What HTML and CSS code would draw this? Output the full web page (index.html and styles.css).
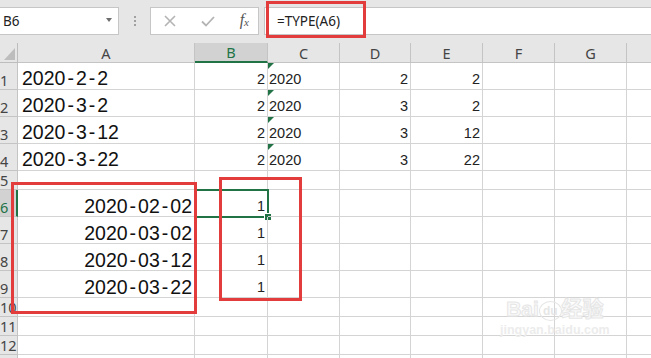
FILE: index.html
```html
<!DOCTYPE html>
<html lang="zh-CN">
<head>
    <meta charset="UTF-8">
    <meta name="viewport" content="width=device-width, initial-scale=1.0">
    <title>TYPE 函数</title>
    <link rel="stylesheet" href="styles.css">
</head>
<body>
    <div class="toolbar">
        <div class="name-box">
            <span>B6</span>
            <span class="drop"></span>
        </div>
        <div class="grip"><i></i><i></i><i></i></div>
        <div class="fx-buttons">
            <svg class="ico" width="12" height="12" viewBox="0 0 12 12"><path d="M1 1 L11 11 M11 1 L1 11" stroke="#b4b4b4" stroke-width="1.6" fill="none"/></svg>
            <svg class="ico" width="14" height="11" viewBox="0 0 14 11"><path d="M1 5.5 L5 9.5 L13 1" stroke="#b4b4b4" stroke-width="1.8" fill="none"/></svg>
            <span class="fx">f<sub>x</sub></span>
        </div>
        <div class="formula">=TYPE(A6)</div>
    </div>

    <div class="sheet">
        <div class="corner"><span class="tri"></span></div>
        <div class="ch">A</div>
        <div class="ch active">B</div>
        <div class="ch">C</div>
        <div class="ch">D</div>
        <div class="ch">E</div>
        <div class="ch">F</div>
        <div class="ch">G</div>
        <div class="ch"></div>

        <div class="rh">1</div>
        <div class="c big">2020<span class="dash">-</span>2<span class="dash">-</span>2</div>
        <div class="c num">2</div>
        <div class="c txt flag">2020</div>
        <div class="c num">2</div>
        <div class="c num">2</div>
        <div class="c"></div><div class="c"></div><div class="c"></div>

        <div class="rh">2</div>
        <div class="c big">2020<span class="dash">-</span>3<span class="dash">-</span>2</div>
        <div class="c num">2</div>
        <div class="c txt flag">2020</div>
        <div class="c num">3</div>
        <div class="c num">2</div>
        <div class="c"></div><div class="c"></div><div class="c"></div>

        <div class="rh">3</div>
        <div class="c big">2020<span class="dash">-</span>3<span class="dash">-</span>12</div>
        <div class="c num">2</div>
        <div class="c txt flag">2020</div>
        <div class="c num">3</div>
        <div class="c num">12</div>
        <div class="c"></div><div class="c"></div><div class="c"></div>

        <div class="rh">4</div>
        <div class="c big">2020<span class="dash">-</span>3<span class="dash">-</span>22</div>
        <div class="c num">2</div>
        <div class="c txt flag">2020</div>
        <div class="c num">3</div>
        <div class="c num">22</div>
        <div class="c"></div><div class="c"></div><div class="c"></div>

        <div class="rh">5</div>
        <div class="c"></div><div class="c"></div><div class="c"></div><div class="c"></div>
        <div class="c"></div><div class="c"></div><div class="c"></div><div class="c"></div>

        <div class="rh active">6</div>
        <div class="c big right">2020<span class="dash">-</span>02<span class="dash">-</span>02</div>
        <div class="c num selected">1<span class="handle"></span></div>
        <div class="c"></div><div class="c"></div><div class="c"></div>
        <div class="c"></div><div class="c"></div><div class="c"></div>

        <div class="rh">7</div>
        <div class="c big right">2020<span class="dash">-</span>03<span class="dash">-</span>02</div>
        <div class="c num">1</div>
        <div class="c"></div><div class="c"></div><div class="c"></div>
        <div class="c"></div><div class="c"></div><div class="c"></div>

        <div class="rh">8</div>
        <div class="c big right">2020<span class="dash">-</span>03<span class="dash">-</span>12</div>
        <div class="c num">1</div>
        <div class="c"></div><div class="c"></div><div class="c"></div>
        <div class="c"></div><div class="c"></div><div class="c"></div>

        <div class="rh">9</div>
        <div class="c big right">2020<span class="dash">-</span>03<span class="dash">-</span>22</div>
        <div class="c num">1</div>
        <div class="c"></div><div class="c"></div><div class="c"></div>
        <div class="c"></div><div class="c"></div><div class="c"></div>

        <div class="rh">10</div>
        <div class="c"></div><div class="c"></div><div class="c"></div><div class="c"></div>
        <div class="c"></div><div class="c"></div><div class="c"></div><div class="c"></div>

        <div class="rh">11</div>
        <div class="c"></div><div class="c"></div><div class="c"></div><div class="c"></div>
        <div class="c"></div><div class="c"></div><div class="c"></div><div class="c"></div>

        <div class="rh">12</div>
        <div class="c"></div><div class="c"></div><div class="c"></div><div class="c"></div>
        <div class="c"></div><div class="c"></div><div class="c"></div><div class="c"></div>

        <div class="rh"></div>
        <div class="c"></div><div class="c"></div><div class="c"></div><div class="c"></div>
        <div class="c"></div><div class="c"></div><div class="c"></div><div class="c"></div>
    </div>

    <!-- annotation boxes drawn over the sheet -->
    <div class="mark mark-formula"></div>
    <div class="mark mark-dates"></div>
    <div class="mark mark-types"></div>

    <div class="watermark">
        <div class="wm-logo">Bai<span class="wm-du">du</span>经验</div>
        <div class="wm-url">jingyan.baidu.com</div>
    </div>
</body>
</html>
```

FILE: styles.css
```css
body {
    margin: 0;
    width: 651px;
    height: 358px;
    overflow: hidden;
    position: relative;
    background: #fff;
    font-family: "Liberation Sans", Arial, sans-serif;
    color: #222;
}

/* formula bar */
.toolbar {
    height: 43px;
    box-sizing: border-box;
    padding-top: 7px;
    background: #e6e6e6;
    display: flex;
    align-items: flex-start;
}

.name-box {
    width: 119px;
    height: 28px;
    box-sizing: border-box;
    background: #fff;
    border: 1px solid #c6c6c6;
    border-left: none;
    display: flex;
    align-items: center;
    justify-content: space-between;
    padding: 0 6px 0 3px;
    font-family: "Noto Sans", sans-serif;
    font-size: 13.5px;
    color: #222;
}

.drop {
    width: 0;
    height: 0;
    border-left: 3.5px solid transparent;
    border-right: 3.5px solid transparent;
    border-top: 4px solid #6e6e6e;
    margin-top: -2px;
}

.grip {
    width: 31px;
    height: 28px;
    display: flex;
    flex-direction: column;
    align-items: center;
    justify-content: center;
    gap: 2px;
}

.grip i {
    display: block;
    width: 2px;
    height: 2px;
    background: #a0a0a0;
}

.fx-buttons {
    width: 109px;
    height: 28px;
    box-sizing: border-box;
    background: #fff;
    border: 1px solid #c6c6c6;
    display: flex;
    align-items: center;
    padding: 0 9px 0 13px;
    justify-content: space-between;
}

.fx {
    font-family: "Liberation Serif", serif;
    font-style: italic;
    font-size: 16px;
    color: #555;
    margin-top: -3px;
}

.fx sub {
    font-size: 11px;
    vertical-align: -1px;
}

.formula {
    flex: 1;
    height: 28px;
    box-sizing: border-box;
    margin-left: 5px;
    background: #fff;
    border: 1px solid #c6c6c6;
    border-right: none;
    padding-left: 12px;
    display: flex;
    align-items: center;
    font-family: "Noto Sans", sans-serif;
    font-size: 13.5px;
    color: #222;
}

/* sheet grid */
.sheet {
    display: grid;
    grid-template-columns: 18px 177px 73px 72px 71px 72px 72px 72px 72px;
    grid-template-rows: 20px repeat(4, 27px) 19px repeat(4, 27px) repeat(4, 19px);
}

.sheet > div {
    box-sizing: border-box;
    border-right: 1px solid #d4d4d4;
    border-bottom: 1px solid #d4d4d4;
    min-width: 0;
}

.corner {
    background: #e6e6e6;
    border-color: #bdbdbd !important;
    position: relative;
}

.tri {
    position: absolute;
    right: 2px;
    bottom: 2px;
    width: 0;
    height: 0;
    border-left: 11px solid transparent;
    border-bottom: 12px solid #bdbdbd;
}

.ch {
    background: #e6e6e6;
    border-color: #c4c4c4 !important;
    display: flex;
    align-items: center;
    justify-content: center;
    font-family: "Noto Sans", sans-serif;
    font-size: 14.5px;
    color: #444;
}

.ch.active {
    background: #d2d2d2;
    border-bottom: 2px solid #217346 !important;
    color: #217346;
}

.rh {
    background: #e6e6e6;
    border-color: #c4c4c4 !important;
    display: flex;
    align-items: flex-end;
    font-family: "Noto Sans", sans-serif;
    font-size: 14.5px;
    line-height: 17px;
    color: #444;
    white-space: nowrap;
    overflow: visible;
}

.rh.active {
    background: #d2d2d2;
    color: #217346;
    border-right: 2px solid #217346 !important;
}

.c {
    display: flex;
    align-items: flex-end;
    white-space: nowrap;
    position: relative;
}

.big {
    font-size: 19.5px;
    line-height: 20px;
    padding-left: 4px;
    padding-bottom: 1px;
    color: #111;
}

.big.right {
    justify-content: flex-end;
    padding-right: 2px;
    padding-bottom: 0;
}

.dash {
    padding: 0 2px;
}

.num {
    justify-content: flex-end;
    font-size: 14.5px;
    line-height: 17px;
    padding-right: 2px;
    padding-bottom: 1px;
    color: #222;
}

.txt {
    font-size: 14.5px;
    line-height: 17px;
    padding-left: 1px;
    padding-bottom: 1px;
    color: #222;
}

.flag::before {
    content: "";
    position: absolute;
    left: 0;
    top: 0;
    border-top: 6px solid #217346;
    border-right: 6px solid transparent;
}

.selected {
    outline: 2px solid #217346;
    outline-offset: -1px;
}

.handle {
    position: absolute;
    right: -5px;
    bottom: -5px;
    width: 8px;
    height: 8px;
    background: #217346;
    border: 1px solid #fff;
    box-sizing: border-box;
}

/* red annotation boxes */
.mark {
    position: absolute;
    border: 3px solid #e23c3c;
    box-sizing: border-box;
}

.mark-formula {
    left: 266px;
    top: 1px;
    width: 100px;
    height: 37px;
}

.mark-dates {
    left: 11px;
    top: 182px;
    width: 186px;
    height: 132px;
}

.mark-types {
    left: 219px;
    top: 177px;
    width: 83px;
    height: 124px;
}

/* baidu watermark */
.watermark {
    position: absolute;
    left: 500px;
    top: 296px;
    text-align: center;
}

.wm-logo {
    font-family: "Liberation Sans", "Noto Sans CJK SC", sans-serif;
    font-size: 21px;
    font-weight: bold;
    line-height: 26px;
    -webkit-text-stroke: 1px #e6e6e6;
    color: #fafafa;
}

.wm-du {
    display: inline-block;
    font-size: 12px;
    line-height: 18px;
    padding: 0 3px;
    border: 1px solid #e6e6e6;
    border-radius: 50%;
    -webkit-text-stroke: 0;
    color: #e6e6e6;
    vertical-align: 1px;
}

.wm-url {
    font-family: "Liberation Sans", sans-serif;
    font-size: 12.5px;
    font-weight: bold;
    color: #ececec;
    line-height: 16px;
}
```
